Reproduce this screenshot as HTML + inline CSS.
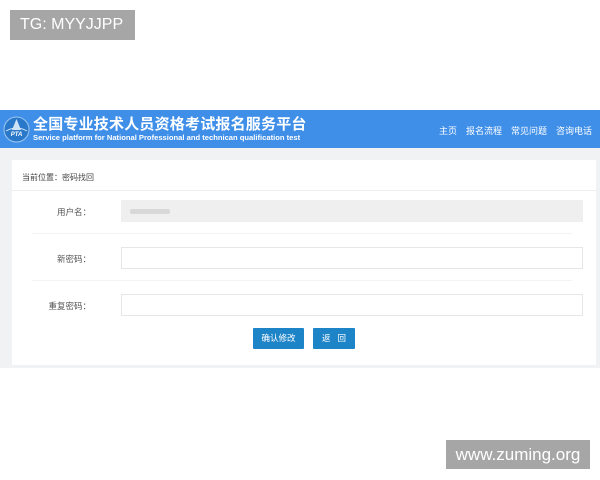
<!DOCTYPE html>
<html><head><meta charset="utf-8"><style>
*{margin:0;padding:0;box-sizing:border-box}
body{width:600px;height:480px;background:#fff;position:relative;overflow:hidden;font-family:"Liberation Sans","Noto Sans CJK SC",sans-serif}
.tg{position:absolute;left:10px;top:10px;width:125px;height:30px;background:#a6a6a6;color:#fff;font-size:16px;line-height:30px;padding-left:10px}
.wm{position:absolute;left:446px;top:440px;width:144px;height:29px;background:#a6a6a6;color:#fff;font-size:17px;line-height:29px;text-align:center}
.hd{position:absolute;left:0;top:110px;width:600px;height:38px;background:#3f8fe9}
.logo{position:absolute;left:3px;top:6px}
.t1{position:absolute;left:33px;top:3px;color:#fff;font-size:15px;font-weight:bold;letter-spacing:0.2px;white-space:nowrap}
.t2{position:absolute;left:33px;top:23px;color:#fff;font-size:7.6px;font-weight:bold;white-space:nowrap}
.nav{position:absolute;right:8px;top:14px;color:#fff;font-size:9px;white-space:nowrap}
.nav span{margin-left:9px}
.bg{position:absolute;left:0;top:148px;width:600px;height:220px;background:#f1f2f4}
.panel{position:absolute;left:12px;top:160px;width:584px;height:205px;background:#fff}
.bc{position:absolute;left:10px;top:12px;font-size:8px;color:#444}
.line{position:absolute;left:0;top:30px;width:584px;height:1px;background:#eceef0}
.lab{position:absolute;font-size:8.5px;color:#555;text-align:right;width:79px}
.inp{position:absolute;left:109px;width:462px;height:22px;border:1px solid #e6e6e6;background:#fff}
.sep{position:absolute;left:20px;width:540px;height:1px;background:#f3f3f3}
.btn{position:absolute;top:168px;height:21px;background:#1e84c8;color:#fff;font-size:8.5px;line-height:21px;text-align:center;border-radius:1px}
</style></head><body>
<div class="tg">TG: MYYJJPP</div>
<div class="hd">
<svg class="logo" width="27" height="27" viewBox="0 0 27 27"><circle cx="13.5" cy="13.5" r="12.5" fill="#2a78c9" stroke="#9cc6f0" stroke-width="1"/><path d="M13.5 3 L18 14 L9 14 Z" fill="#cfe3f7"/><path d="M3 15 Q13.5 9 24 15" stroke="#cfe3f7" stroke-width="1" fill="none"/><text x="13.5" y="20" font-size="6" font-weight="bold" fill="#fff" text-anchor="middle" font-style="italic" font-family="Liberation Sans">PTA</text></svg>
<div class="t1">全国专业技术人员资格考试报名服务平台</div>
<div class="t2">Service platform for National Professional and technican qualification test</div>
<div class="nav"><span>主页</span><span>报名流程</span><span>常见问题</span><span>咨询电话</span></div>
</div>
<div class="bg"></div>
<div class="panel">
<div class="bc">当前位置：密码找回</div>
<div class="line"></div>
<div class="lab" style="left:0;top:46px">用户名：</div>
<div class="inp" style="top:40px;background:#efefef;border-color:#efefef"><div style="position:absolute;left:8px;top:8px;width:40px;height:5px;background:#d8d8d8;border-radius:2px"></div></div>
<div class="sep" style="top:73px"></div>
<div class="lab" style="left:0;top:93px">新密码：</div>
<div class="inp" style="top:87px"></div>
<div class="sep" style="top:120px"></div>
<div class="lab" style="left:0;top:140px">重复密码：</div>
<div class="inp" style="top:134px"></div>
<div class="btn" style="left:241px;width:51px">确认修改</div>
<div class="btn" style="left:301px;width:42px">返&nbsp;&nbsp;&nbsp;回</div>
</div>
<div class="wm">www.zuming.org</div>
</body></html>
